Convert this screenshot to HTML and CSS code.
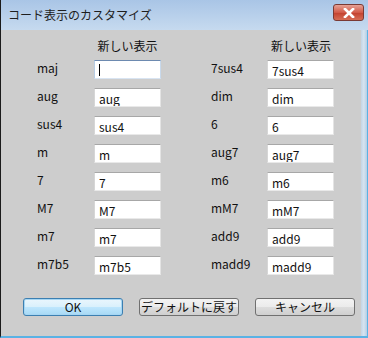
FILE: index.html
```html
<!doctype html>
<html lang="ja">
    <head>
        <meta charset="UTF-8" />
        <meta name="viewport" content="width=device-width, initial-scale=1.0" />
        <title>コード表示のカスタマイズ</title>
        <link rel="stylesheet" href="styles.css">
    </head>
    <body>
        <div class="window">
            <div class="titlebar">
                <span class="title">コード表示のカスタマイズ</span>
                <button class="close" aria-label="閉じる">
                    <svg width="12" height="10" viewBox="0 0 12 10">
                        <path d="M2 1 L10 9 M10 1 L2 9" stroke="white" stroke-width="2.6" stroke-linecap="square" />
                    </svg>
                </button>
            </div>
            <div class="frame">
                <div class="content">
                    <div class="grid">
                        <div></div>
                        <div class="head">新しい表示</div>
                        <div></div>
                        <div></div>
                        <div class="head">新しい表示</div>

                        <label class="name">maj</label>
                        <div class="caret-wrap">
                            <input class="field focused" type="text" value="" />
                            <span class="caret"></span>
                        </div>
                        <div></div>
                        <label class="name">7sus4</label>
                        <input class="field" type="text" value="7sus4" />

                        <label class="name">aug</label>
                        <input class="field" type="text" value="aug" />
                        <div></div>
                        <label class="name">dim</label>
                        <input class="field" type="text" value="dim" />

                        <label class="name">sus4</label>
                        <input class="field" type="text" value="sus4" />
                        <div></div>
                        <label class="name">6</label>
                        <input class="field" type="text" value="6" />

                        <label class="name">m</label>
                        <input class="field" type="text" value="m" />
                        <div></div>
                        <label class="name">aug7</label>
                        <input class="field" type="text" value="aug7" />

                        <label class="name">7</label>
                        <input class="field" type="text" value="7" />
                        <div></div>
                        <label class="name">m6</label>
                        <input class="field" type="text" value="m6" />

                        <label class="name">M7</label>
                        <input class="field" type="text" value="M7" />
                        <div></div>
                        <label class="name">mM7</label>
                        <input class="field" type="text" value="mM7" />

                        <label class="name">m7</label>
                        <input class="field" type="text" value="m7" />
                        <div></div>
                        <label class="name">add9</label>
                        <input class="field" type="text" value="add9" />

                        <label class="name">m7b5</label>
                        <input class="field" type="text" value="m7b5" />
                        <div></div>
                        <label class="name">madd9</label>
                        <input class="field" type="text" value="madd9" />
                    </div>
                    <div class="buttons">
                        <button class="btn default">OK</button>
                        <button class="btn">デフォルトに戻す</button>
                        <button class="btn">キャンセル</button>
                    </div>
                </div>
                <div class="edge"></div>
            </div>
        </div>
    </body>
</html>
```

FILE: styles.css
```css
body {
    margin: 0;
    background-color: #cdcdcd;
    font-family: "Noto Sans CJK JP", "DejaVu Sans", sans-serif;
    font-size: 12px;
    color: #111;
}

.window {
    width: 368px;
    height: 338px;
    display: flex;
    flex-direction: column;
    box-sizing: border-box;
    border-left: 1px solid #1a1a1a;
    border-bottom: 2px solid #5ab2e4;
}

.titlebar {
    height: 30px;
    flex-shrink: 0;
    display: flex;
    align-items: flex-start;
    justify-content: space-between;
    background: linear-gradient(#a9c5e6, #c6daef);
}

.title {
    margin: 6px 0 0 7px;
    font-size: 12px;
    color: #1e1e1e;
}

.close {
    width: 31px;
    height: 17px;
    margin: 4px 4px 0 0;
    padding: 0;
    border: 1px solid #7a3a34;
    border-radius: 3px;
    background: linear-gradient(#e7a296, #d25a48 50%, #c2402e 51%, #d66d55);
    display: flex;
    align-items: center;
    justify-content: center;
}

.frame {
    flex: 1;
    display: flex;
}

.content {
    flex: 1;
    display: flex;
    flex-direction: column;
}

.edge {
    width: 7px;
    background: linear-gradient(90deg, #c4d4e4, #d6e4f1 40%, #b7cde3 85%, #5ab2e4 86%);
}

.grid {
    display: grid;
    grid-template-columns: 57px 67px 50px 56px 68px;
    grid-template-rows: 11px repeat(8, 19px);
    row-gap: 9px;
    align-items: center;
    margin: 10px 0 0 36px;
}

.head {
    text-align: center;
    font-size: 12px;
    line-height: 14px;
}

.name {
    font-size: 12px;
    margin-top: -4px;
}

.field {
    width: 67px;
    height: 19px;
    box-sizing: border-box;
    margin: 0;
    padding: 1px 0 0 4px;
    border: 1px solid;
    border-color: #a7a7a7 #e4e4e4 #e9e9e9 #d6d6d6;
    background: white;
    font-family: inherit;
    font-size: 12px;
    color: #111;
    outline: none;
}

.field.focused {
    border-color: #6d8ab0 #c8d9ec #d8e4f2 #b8cde4;
}

.caret-wrap {
    position: relative;
    height: 19px;
}

.caret {
    position: absolute;
    left: 5px;
    top: 4px;
    width: 1px;
    height: 12px;
    background: #000;
}

.buttons {
    display: flex;
    gap: 16px;
    margin: 23px 0 0 22px;
}

.btn {
    width: 100px;
    height: 18px;
    padding: 0;
    border: 1px solid #707070;
    border-radius: 3px;
    background: linear-gradient(#f3f3f3, #ebebeb 50%, #dddddd 51%, #cfcfcf);
    font-family: inherit;
    font-size: 12px;
    line-height: 14px;
    color: #111;
}

.btn.default {
    border-color: #3c7fb1;
    box-shadow: inset 0 0 0 1px #a6d6f3;
    background: linear-gradient(#eaf6fd, #d9f0fc 50%, #bee6fd 51%, #a7d9f5);
}
```
